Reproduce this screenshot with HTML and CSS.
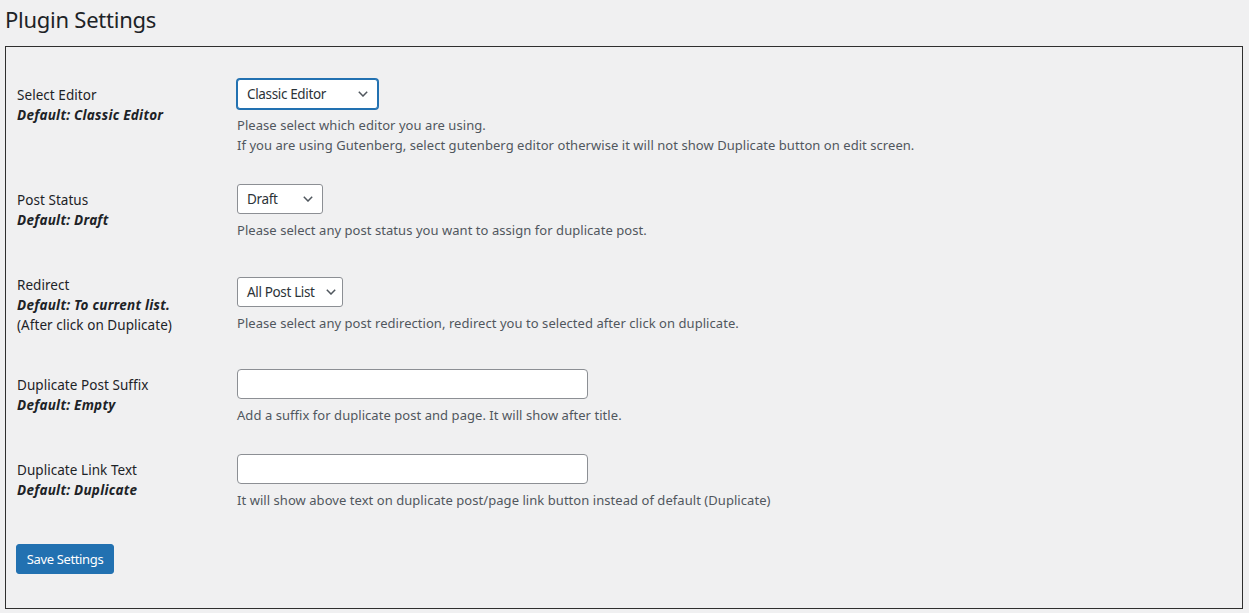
FILE: index.html
```html
<!DOCTYPE html>
<html>
<head>
<meta charset="utf-8">
<title>Plugin Settings</title>
<link rel="stylesheet" href="styles.css">
</head>
<body>
<div class="wrap">
  <h1 class="title">Plugin Settings</h1>
  <div class="panel">
    <table class="form-table">
      <tr>
        <th><div class="lbl">Select Editor</div><div class="def">Default: Classic Editor</div></th>
        <td>
          <div class="select is-focus w-editor"><span>Classic Editor</span><svg class="chev" width="10" height="6" viewBox="0 0 10 6"><path d="M0.8 0.8 L5 5 L9.2 0.8" fill="none" stroke="#50575e" stroke-width="1.5"/></svg></div>
          <p class="desc">Please select which editor you are using.<br>If you are using Gutenberg, select gutenberg editor otherwise it will not show Duplicate button on edit screen.</p>
        </td>
      </tr>
      <tr>
        <th><div class="lbl">Post Status</div><div class="def">Default: Draft</div></th>
        <td>
          <div class="select w-status"><span>Draft</span><svg class="chev" width="10" height="6" viewBox="0 0 10 6"><path d="M0.8 0.8 L5 5 L9.2 0.8" fill="none" stroke="#50575e" stroke-width="1.5"/></svg></div>
          <p class="desc">Please select any post status you want to assign for duplicate post.</p>
        </td>
      </tr>
      <tr>
        <th><div class="lbl">Redirect</div><div class="def">Default: To current list.</div><div class="lbl">(After click on Duplicate)</div></th>
        <td>
          <div class="select w-redirect"><span>All Post List</span><svg class="chev" width="10" height="6" viewBox="0 0 10 6"><path d="M0.8 0.8 L5 5 L9.2 0.8" fill="none" stroke="#50575e" stroke-width="1.5"/></svg></div>
          <p class="desc">Please select any post redirection, redirect you to selected after click on duplicate.</p>
        </td>
      </tr>
      <tr>
        <th><div class="lbl">Duplicate Post Suffix</div><div class="def">Default: Empty</div></th>
        <td>
          <input class="text-input" type="text">
          <p class="desc">Add a suffix for duplicate post and page. It will show after title.</p>
        </td>
      </tr>
      <tr>
        <th><div class="lbl">Duplicate Link Text</div><div class="def">Default: Duplicate</div></th>
        <td>
          <input class="text-input" type="text">
          <p class="desc">It will show above text on duplicate post/page link button instead of default (Duplicate)</p>
        </td>
      </tr>
    </table>
    <button class="btn" type="button">Save Settings</button>
  </div>
</div>
</body>
</html>
```
FILE: styles.css
```css
html, body {
  margin: 0;
  padding: 0;
  background: #f0f0f1;
}
body {
  font-family: "Noto Sans", "Open Sans", sans-serif;
  color: #1d2327;
  font-size: 13px;
  letter-spacing: 0.05px;
}
.wrap {
  padding: 0 6px 0 5px;
}
.title {
  margin: 0;
  padding: 4px 0 0 0;
  height: 46px;
  box-sizing: border-box;
  font-size: 22px;
  line-height: 30px;
  font-weight: 400;
  letter-spacing: -0.25px;
  color: #1d2327;
}
.panel {
  border: 1px solid #2f2f2f;
  height: 563px;
  box-sizing: border-box;
  padding: 18px 10px 0 11px;
}
.form-table {
  border-collapse: collapse;
  border-spacing: 0;
}
.form-table th {
  width: 220px;
  padding: 20px 0 20px 0;
  text-align: left;
  vertical-align: top;
  font-weight: 400;
  box-sizing: border-box;
}
.form-table td {
  padding: 14px 0 15px 0;
  vertical-align: middle;
}
.lbl, .def {
  line-height: 20px;
  white-space: nowrap;
}
.lbl {
  font-size: 13.5px;
}
.def {
  font-size: 13.5px;
  font-weight: 700;
  font-style: italic;
  letter-spacing: 0.25px;
}
.select {
  display: flex;
  align-items: center;
  justify-content: space-between;
  height: 30px;
  box-sizing: border-box;
  border: 1px solid #8c8f94;
  border-radius: 3px;
  background: #fff;
  padding: 0 9px 0 9px;
  font-size: 13.5px;
  letter-spacing: -0.35px;
  color: #2c3338;
  white-space: nowrap;
}
.select.is-focus {
  border-color: #2271b1;
  box-shadow: 0 0 0 1px #2271b1;
}
.w-editor { width: 141px; }
.w-status { width: 86px; }
.w-redirect { width: 106px; padding-right: 6px; }
.chev {
  flex: none;
}
.text-input {
  display: block;
  width: 351px;
  height: 30px;
  box-sizing: border-box;
  margin: 0;
  border: 1px solid #8c8f94;
  border-radius: 4px;
  background: #fff;
}
.desc {
  margin: 6px 0 0 0;
  line-height: 20px;
  color: #50575e;
  white-space: nowrap;
}
.btn {
  display: block;
  margin: 19px 0 0 -1px;
  height: 30px;
  width: 98px;
  padding: 0;
  border: 1px solid #2271b1;
  border-radius: 3px;
  background: #2271b1;
  color: #fff;
  font-family: inherit;
  font-size: 13px;
  letter-spacing: -0.35px;
}
```
